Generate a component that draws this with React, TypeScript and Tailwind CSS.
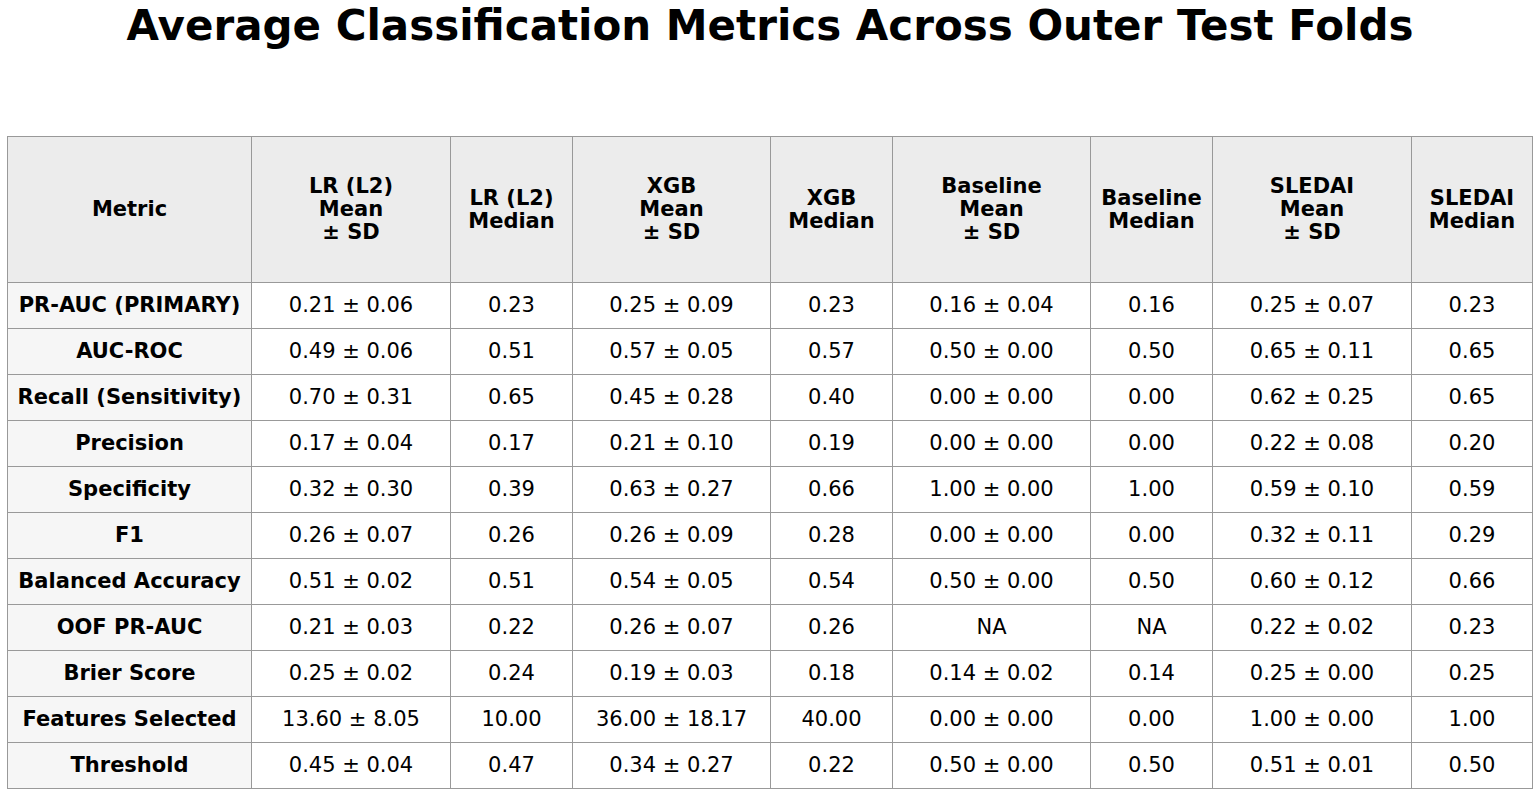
const headers = [
  ['Metric'],
  ['LR (L2)', 'Mean', '± SD'],
  ['LR (L2)', 'Median'],
  ['XGB', 'Mean', '± SD'],
  ['XGB', 'Median'],
  ['Baseline', 'Mean', '± SD'],
  ['Baseline', 'Median'],
  ['SLEDAI', 'Mean', '± SD'],
  ['SLEDAI', 'Median'],
];

const rows: string[][] = [
  ['PR-AUC (PRIMARY)', '0.21 ± 0.06', '0.23', '0.25 ± 0.09', '0.23', '0.16 ± 0.04', '0.16', '0.25 ± 0.07', '0.23'],
  ['AUC-ROC', '0.49 ± 0.06', '0.51', '0.57 ± 0.05', '0.57', '0.50 ± 0.00', '0.50', '0.65 ± 0.11', '0.65'],
  ['Recall (Sensitivity)', '0.70 ± 0.31', '0.65', '0.45 ± 0.28', '0.40', '0.00 ± 0.00', '0.00', '0.62 ± 0.25', '0.65'],
  ['Precision', '0.17 ± 0.04', '0.17', '0.21 ± 0.10', '0.19', '0.00 ± 0.00', '0.00', '0.22 ± 0.08', '0.20'],
  ['Specificity', '0.32 ± 0.30', '0.39', '0.63 ± 0.27', '0.66', '1.00 ± 0.00', '1.00', '0.59 ± 0.10', '0.59'],
  ['F1', '0.26 ± 0.07', '0.26', '0.26 ± 0.09', '0.28', '0.00 ± 0.00', '0.00', '0.32 ± 0.11', '0.29'],
  ['Balanced Accuracy', '0.51 ± 0.02', '0.51', '0.54 ± 0.05', '0.54', '0.50 ± 0.00', '0.50', '0.60 ± 0.12', '0.66'],
  ['OOF PR-AUC', '0.21 ± 0.03', '0.22', '0.26 ± 0.07', '0.26', 'NA', 'NA', '0.22 ± 0.02', '0.23'],
  ['Brier Score', '0.25 ± 0.02', '0.24', '0.19 ± 0.03', '0.18', '0.14 ± 0.02', '0.14', '0.25 ± 0.00', '0.25'],
  ['Features Selected', '13.60 ± 8.05', '10.00', '36.00 ± 18.17', '40.00', '0.00 ± 0.00', '0.00', '1.00 ± 0.00', '1.00'],
  ['Threshold', '0.45 ± 0.04', '0.47', '0.34 ± 0.27', '0.22', '0.50 ± 0.00', '0.50', '0.51 ± 0.01', '0.50'],
];

export default function App() {
  return (
    <div className="w-[1540px] h-[796px] bg-white text-black overflow-hidden font-['DejaVu_Sans',sans-serif]">
      {/* Title */}
      <h1 className="h-[50px] pt-[1px] text-center text-[42px] leading-[50px] font-bold">
        Average Classification Metrics Across Outer Test Folds
      </h1>

      {/* Table */}
      <div className="mt-[86px] ml-[7px] w-[1526px] grid grid-cols-[244px_199px_122px_198px_122px_198px_122px_199px_121px] border-l border-t border-[#999999]">
        {headers.map((lines, i) => (
          <div
            key={i}
            className="h-[146px] flex flex-col items-center justify-center bg-[#ececec] border-r border-b border-[#999999] text-[21px] leading-[23px] font-bold"
          >
            {lines.map(l => (
              <span key={l}>{l}</span>
            ))}
          </div>
        ))}
        {rows.map((row, r) =>
          row.map((cell, c) => (
            <div
              key={`${r}-${c}`}
              className={
                c === 0
                  ? 'h-[46px] flex items-center justify-center bg-[#f6f6f6] border-r border-b border-[#999999] text-[21px] font-bold'
                  : 'h-[46px] flex items-center justify-center bg-white border-r border-b border-[#999999] text-[21px]'
              }
            >
              {cell}
            </div>
          ))
        )}
      </div>
    </div>
  );
}
